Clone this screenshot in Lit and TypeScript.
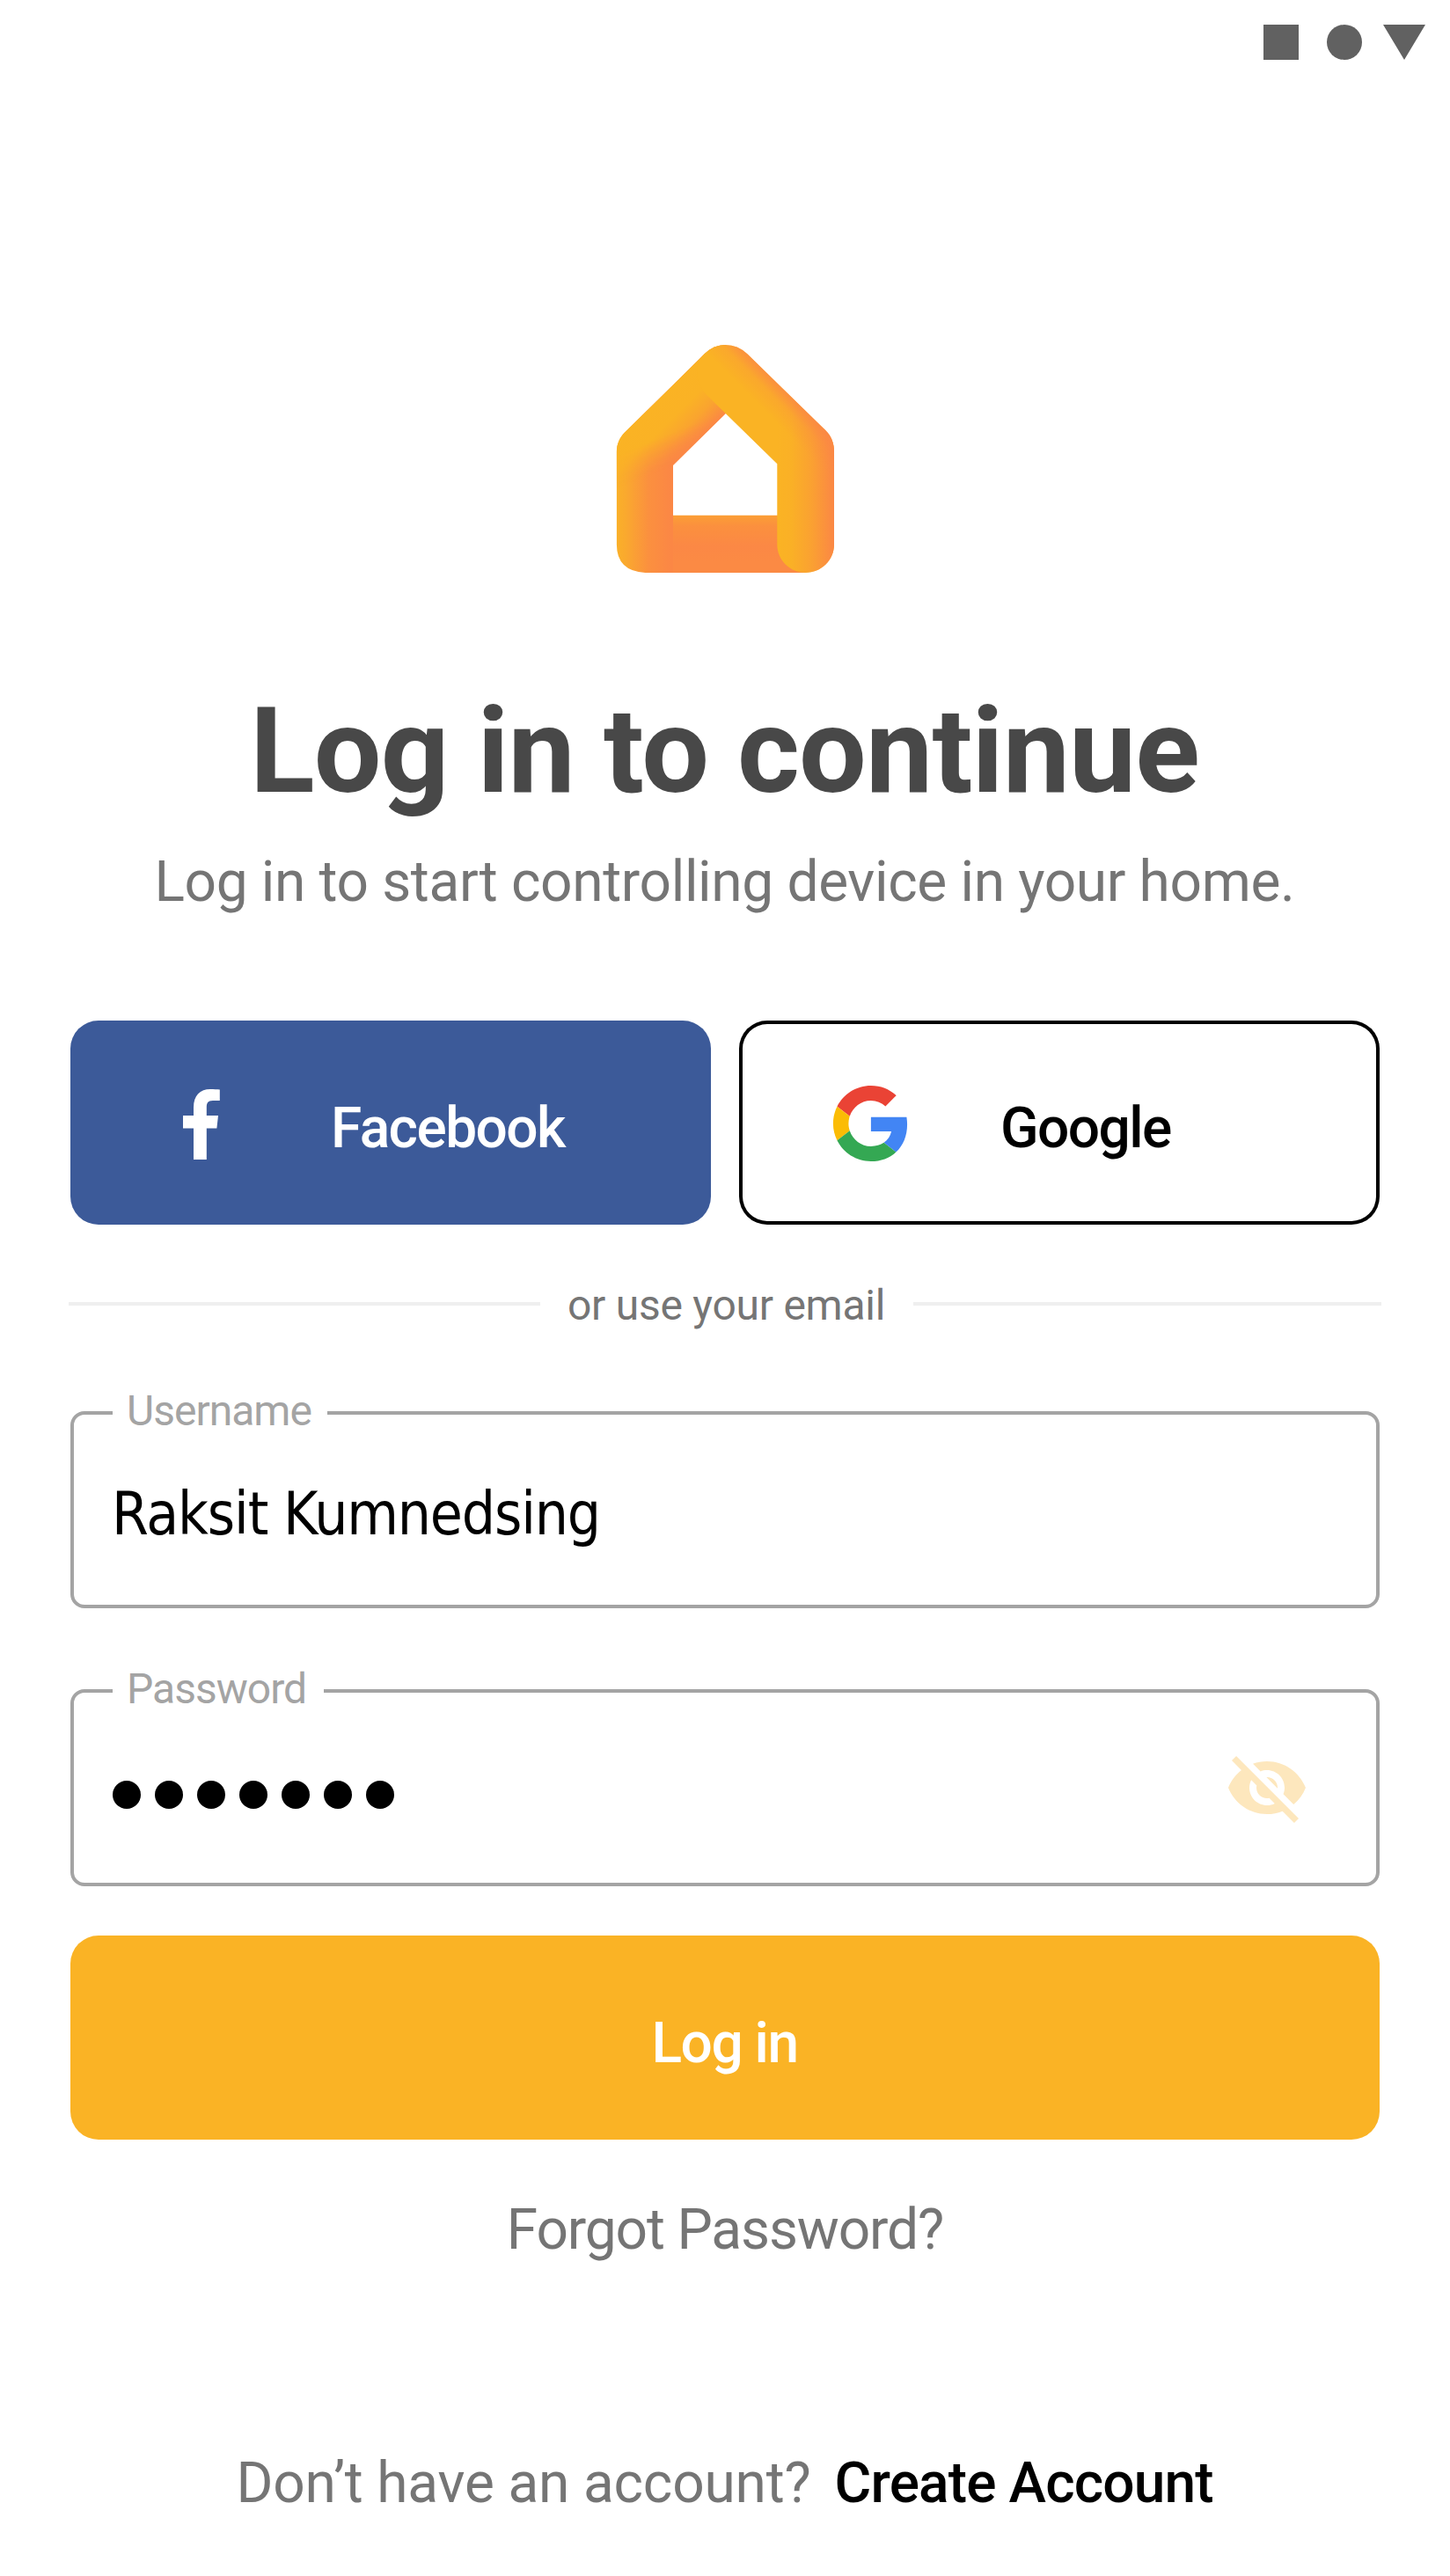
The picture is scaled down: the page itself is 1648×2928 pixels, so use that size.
import { LitElement, html, css, svg } from "lit";
import { customElement, property } from "lit/decorators.js";

@customElement("home-logo")
export class HomeLogo extends LitElement {
  static styles = css`
    :host { display: block; width: 248px; height: 260px; }
    svg { display: block; }
  `;
  render() {
    return html`<svg width="248" height="260" viewBox="0 0 248 260" aria-hidden="true">
      <defs>
        <linearGradient id="floor" gradientUnits="userSpaceOnUse" x1="0" y1="193" x2="0" y2="245">
          <stop offset="0" stop-color="#fb9f35" />
          <stop offset=".25" stop-color="#fb903e" />
          <stop offset=".7" stop-color="#fb8845" />
          <stop offset="1" stop-color="#fb8a44" />
        </linearGradient>
        <linearGradient id="wall" gradientUnits="userSpaceOnUse" x1="0" y1="0" x2="62" y2="0">
          <stop offset="0" stop-color="#fab128" />
          <stop offset=".2" stop-color="#faa82f" />
          <stop offset=".6" stop-color="#fb903f" />
          <stop offset="1" stop-color="#fb8745" />
        </linearGradient>
        <linearGradient id="slope" gradientUnits="userSpaceOnUse" x1="55.5" y1="55.5" x2="101" y2="101">
          <stop offset="0" stop-color="#fab324" />
          <stop offset=".4" stop-color="#fab225" />
          <stop offset=".7" stop-color="#faa42f" />
          <stop offset="1" stop-color="#fb8844" />
        </linearGradient>
        <linearGradient id="fade" gradientUnits="userSpaceOnUse" x1="42.900" y1="107.900" x2="56.200" y2="141.400">
          <stop offset="0" stop-color="#fff" />
          <stop offset="1" stop-color="#000" />
        </linearGradient>
        <mask id="bend" maskUnits="userSpaceOnUse" x="0" y="0" width="248" height="260">
          <path fill="url(#fade)" d="M0 0H248V260H0z" />
        </mask>
        <linearGradient id="side" gradientUnits="userSpaceOnUse" x1="183" y1="0" x2="248" y2="0">
          <stop offset="0" stop-color="#fb8745" stop-opacity="0" />
          <stop offset=".25" stop-color="#fb8745" stop-opacity=".06" />
          <stop offset=".6" stop-color="#fb8745" stop-opacity=".4" />
          <stop offset="1" stop-color="#fb8745" />
        </linearGradient>
        <linearGradient id="roof" gradientUnits="userSpaceOnUse" x1="100" y1="5" x2="147" y2="-42" gradientTransform="translate(-24 24)">
          <stop offset="0" stop-color="#fb8745" stop-opacity="0" />
          <stop offset=".5" stop-color="#fb8745" stop-opacity="0" />
          <stop offset=".78" stop-color="#fb8745" stop-opacity=".25" />
          <stop offset="1" stop-color="#fb8745" stop-opacity=".85" />
        </linearGradient>
      </defs>
      <path fill="url(#floor)" d="M33 193.7H216V259H33z" />
      <path fill="url(#wall)" d="M.9 121.3C.9 112 5 104 12.3 97.3L100.7 10.3Q111 0 124.7 0V78L65 137V259H33.3Q.9 257 .9 227z" />
      <path fill="url(#slope)" mask="url(#bend)" d="M.9 121.3C.9 112 5 104 12.3 97.3L100.7 10.3Q111 0 124.7 0V78L65 137V200H.9z" />
      ${["#fab324", "url(#side)", "url(#roof)"].map(
        (fill) => svg`<path fill=${fill} d="M100.7 10.3Q111 0 124.7 0T149.3 10.3L238.3 97.3C245 104 248 112 248 121.3V227C248 245 233 259 215.7 259S183.3 245 183.3 227V135.3L124.7 78L103 57C90 43 88 23 100.7 10.3z" />`
      )}
    </svg>`;
  }
}

@customElement("text-field")
export class TextField extends LitElement {
  @property() label = "";
  @property({ type: Number }) notch = 244;
  static styles = css`
    :host { display: block; position: relative; box-sizing: border-box; height: 224px; border: 4px solid #a4a4a4; border-radius: 16px; }
    .label {
      position: absolute; left: 44px; top: -33px; box-sizing: border-box; padding-left: 16px;
      font-size: 48px; line-height: 57px; letter-spacing: -0.98px; color: #a4a4a4; background: #fff; white-space: nowrap;
    }
    .body { box-sizing: border-box; height: 100%; padding: 0 76px 0 44px; display: flex; align-items: center; justify-content: space-between; }
  `;
  render() {
    return html`<span class="label" style="width:${this.notch}px">${this.label}</span>
      <div class="body"><slot></slot></div>`;
  }
}

@customElement("app-root")
export class AppRoot extends LitElement {
  static styles = css`
    :host { display: block; font-family: Roboto, "Liberation Sans", sans-serif; background: #fff; }
    .screen { box-sizing: border-box; height: 2928px; padding: 0 80px; display: flex; flex-direction: column; overflow: hidden; }
    .status { display: flex; justify-content: flex-end; height: 40px; margin: 28px -52px 0 0; }
    .status svg { display: block; }
    .logo { align-self: center; margin-top: 324px; }
    h1 { margin: 122px 1px 0 0; text-align: center; font-size: 136px; line-height: 159px; font-weight: 700; letter-spacing: -0.86px; color: #484848; white-space: nowrap; }
    .sub { margin: 32px 1px 0 0; text-align: center; font-size: 64px; line-height: 75px; letter-spacing: -0.35px; color: #757575; white-space: nowrap; }
    .social { display: grid; grid-template-columns: 728px 728px; gap: 32px; margin-top: 120px; }
    button { font: inherit; margin: 0; padding: 0; border: 0; }
    .sbtn { box-sizing: border-box; height: 232px; border-radius: 32px; display: flex; align-items: flex-start; padding: 0 0 0 105px; font-size: 64px; line-height: 75px; font-weight: 500; letter-spacing: -1.55px; }
    .sbtn .ico { width: 88px; height: 88px; margin: 74px 104px 0 0; display: flex; align-items: center; justify-content: center; }
    .sbtn .txt { margin-top: 85px; }
    .fb { background: #3c5a99; color: #fff; }
    .fb .ico { margin-right: 103px; }
    .gg { background: #fff; color: #000; box-shadow: inset 0 0 0 4px #000; }
    .gg .ico { margin-top: 73px; }
    .divider { display: flex; align-items: flex-start; gap: 32px; margin: 63px -2px 0; height: 57px; font-size: 48px; line-height: 57px; letter-spacing: -0.26px; color: #757575; white-space: nowrap; }
    .line { height: 4px; margin-top: 25px; background: #efefef; }
    .line.start { flex: 0 0 536px; }
    .line.end { flex: 0 0 532px; margin-left: auto; }
    .divider span { margin-left: -1px; margin-right: -20px; }
    text-field { margin-top: 92px; }
    .name { font-family: "DejaVu Sans Condensed", "DejaVu Sans", sans-serif; font-stretch: condensed; font-size: 67px; line-height: 78px; letter-spacing: -1.15px; color: #000; margin: 10px 0 0 -1px; white-space: nowrap; }
    .dots { display: flex; gap: 16px; margin-top: 16px; }
    .dots i { width: 32px; height: 32px; border-radius: 50%; background: #000; }
    .eye { display: block; }
    .login { display: block; height: 232px; margin-top: 56px; border-radius: 32px; background: #fab325; color: #fff; font-size: 64px; line-height: 75px; font-weight: 500; letter-spacing: -1.5px; padding: 13px 1px 0 0; }
    .forgot { margin-top: 65px; text-align: center; font-size: 64px; line-height: 75px; letter-spacing: -1.14px; color: #757575; }
    .foot { display: flex; justify-content: center; gap: 27px; margin: 213px 1px 0 0; font-size: 64px; line-height: 75px; white-space: nowrap; }
    .ask { letter-spacing: -0.18px; color: #757575; }
    .create { font-weight: 500; letter-spacing: -0.87px; color: #000; }
  `;
  render() {
    return html`<main class="screen">
      <div class="status">
        <svg width="184" height="40" viewBox="0 0 184 40" fill="#616161"><path d="M0 0h40v40H0zM136 0h48l-24 40z" /><circle cx="92" cy="20" r="20" /></svg>
      </div>
      <home-logo class="logo"></home-logo>
      <h1>Log in to continue</h1>
      <div class="sub">Log in to start controlling device in your home.</div>
      <div class="social">
        <button class="sbtn fb">
          <span class="ico"><svg width="42" height="80" viewBox="0 0 42 80"><path fill="#fff" d="M12 80V44.4H0V30H12V21C12 7 19.500 0 31 0c4 0 8 .2 10.800.600V13H34c-6 0-7.200 3-7.200 7.500V30H40l-1.600 14.400H26.800V80z" /></svg></span>
          <span class="txt">Facebook</span>
        </button>
        <button class="sbtn gg">
          <span class="ico"><svg width="86" height="86" viewBox="-0.5 0 48 48">
            <path fill="#EA4335" d="M24 9.5c3.54 0 6.710 1.220 9.210 3.600l6.850-6.850C35.900 2.380 30.470 0 24 0 14.620 0 6.510 5.380 2.560 13.220l7.980 6.190C12.430 13.720 17.740 9.500 24 9.500z" />
            <path fill="#4285F4" d="M46.980 24.550c0-1.570-.15-3.090-.38-4.550H24v9.020h12.940c-.58 2.960-2.260 5.480-4.780 7.180l7.730 6c4.510-4.180 7.090-10.360 7.090-17.650z" />
            <path fill="#FBBC05" d="M10.530 28.590c-.48-1.450-.76-2.990-.76-4.590s.27-3.140.76-4.590l-7.980-6.190C.92 16.460 0 20.120 0 24c0 3.880.92 7.540 2.560 10.780l7.970-6.190z" />
            <path fill="#34A853" d="M24 48c6.480 0 11.930-2.130 15.890-5.810l-7.730-6c-2.150 1.450-4.920 2.300-8.160 2.300-6.260 0-11.570-4.220-13.470-9.910l-7.980 6.190C6.510 42.620 14.620 48 24 48z" />
          </svg></span>
          <span class="txt">Google</span>
        </button>
      </div>
      <div class="divider"><div class="line start"></div><span>or use your email</span><div class="line end"></div></div>
      <text-field label="Username" .notch=${244}><span class="name">Raksit Kumnedsing</span></text-field>
      <text-field label="Password" .notch=${240}>
        <div class="dots">${Array.from({ length: 7 }, () => html`<i></i>`)}</div>
        <svg class="eye" width="96" height="96" viewBox="0 0 24 24"><path fill="#fde7bd" d="M12 7c2.760 0 5 2.240 5 5 0 .65-.13 1.260-.36 1.830l2.920 2.920c1.510-1.260 2.700-2.890 3.430-4.750-1.730-4.390-6-7.500-11-7.500-1.400 0-2.740.25-3.980.700l2.160 2.160C10.740 7.130 11.350 7 12 7zM2 4.270l2.280 2.280.46.46C3.080 8.300 1.780 10.020 1 12c1.730 4.390 6 7.500 11 7.500 1.550 0 3.030-.3 4.380-.84l.42.42L19.730 22 21 20.730 3.270 3 2 4.270zM7.530 9.800l1.550 1.550c-.05.21-.08.43-.08.650 0 1.660 1.340 3 3 3 .22 0 .44-.03.650-.08l1.550 1.550c-.67.33-1.410.53-2.200.53-2.760 0-5-2.240-5-5 0-.79.200-1.530.53-2.200zm4.310-.78l3.150 3.150.02-.16c0-1.660-1.340-3-3-3l-.17.01z" /></svg>
      </text-field>
      <button class="login">Log in</button>
      <div class="forgot">Forgot Password?</div>
      <div class="foot"><span class="ask">Don’t have an account?</span><span class="create">Create Account</span></div>
    </main>`;
  }
}
